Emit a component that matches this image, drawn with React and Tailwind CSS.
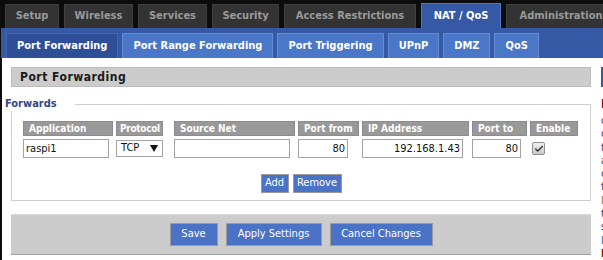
import { Check } from "lucide-react"

const mainTabs = [
    { label: "Setup", w: "w-[54px]" },
    { label: "Wireless", w: "w-[69px]" },
    { label: "Services", w: "w-[69px]" },
    { label: "Security", w: "w-[67px]" },
    { label: "Access Restrictions", w: "w-[132px]" },
    { label: "NAT / QoS", w: "w-[80px]", active: true },
    { label: "Administration", w: "w-[110px]" },
]

const subTabs = [
    { label: "Port Forwarding", active: true },
    { label: "Port Range Forwarding" },
    { label: "Port Triggering" },
    { label: "UPnP" },
    { label: "DMZ" },
    { label: "QoS" },
]

function Header({ children, className = "pl-[5px]" }) {
    return (
        <div className={`h-[15px] bg-[#999] border border-[#8c8c8c] text-white font-bold text-[10px] leading-[13px] whitespace-nowrap overflow-hidden ${className}`}>
            {children}
        </div>
    )
}

function Field({ value, right, className = "" }) {
    return (
        <div className={`h-[19px] bg-white border border-[#a3a3a3] text-[11px] leading-[17px] px-[2px] text-[#111] ${right ? "text-right" : ""} ${className}`}>
            {value}
        </div>
    )
}

function BlueButton({ children, className = "" }) {
    return (
        <div className={`flex items-center justify-center bg-[#4a72c6] border border-[#9b9b9b] text-white text-[11px] ${className}`}>
            {children}
        </div>
    )
}

export default function App() {
    return (
        <div className="w-[603px] h-[260px] overflow-hidden bg-[#0c0c0c] font-['DejaVu_Sans_Condensed','DejaVu_Sans',sans-serif]">
            {/* Main tabs */}
            <div className="flex items-end h-[28px] pl-[5px] gap-[5px]">
                {mainTabs.map((t) => (
                    <div
                        key={t.label}
                        className={`${t.w} shrink-0 flex items-center justify-center text-[11px] font-bold whitespace-nowrap border border-b-0 ${t.active ? "h-[25px] bg-[#3559a5] border-[#5076c2] text-white" : "h-[24px] bg-[#333] border-[#3e3e3e] text-[#9a9a9a]"}`}
                    >
                        {t.label}
                    </div>
                ))}
            </div>

            {/* Sub tabs */}
            <div className="ml-[1px] h-[30px] bg-[#3559a5] flex items-end gap-[4px] pl-[5px]">
                {subTabs.map((t) => (
                    <div
                        key={t.label}
                        className={`h-[25px] px-[10px] flex items-center text-[11px] font-bold text-white whitespace-nowrap border border-b-0 ${t.active ? "bg-[#2e4f98] border-[#4667b2]" : "bg-[#4a77c8] border-[#658cd4]"}`}
                    >
                        {t.label}
                    </div>
                ))}
            </div>

            {/* Content */}
            <div className="ml-[2px] h-[202px] bg-white flex">
                <div className="w-[598px] shrink-0 pt-[9px] px-[9px]">
                    <div className="h-[20px] bg-[#ccc] border border-[#bdbdbd] pl-[8px] text-[12px] font-bold tracking-[0.5px] leading-[18px] text-[#1a1a1a]">
                        Port Forwarding
                    </div>

                    <fieldset className="mt-[10px] border border-[#cfcfcf] pl-[11px] pb-[7px]">
                        <legend className="ml-[-18px] pr-[18px] text-[11px] font-bold leading-[14px] text-[#34478c]">
                            Forwards
                        </legend>
                        <div className="pt-[10px] grid grid-cols-[90px_55px_121px_61px_107px_55px_48px] gap-x-[3px] gap-y-[3px]">
                            <Header>Application</Header>
                            <Header className="w-[47px] pl-[3px] tracking-[-0.3px]">Protocol</Header>
                            <Header>Source Net</Header>
                            <Header>Port from</Header>
                            <Header>IP Address</Header>
                            <Header>Port to</Header>
                            <Header>Enable</Header>

                            <Field value="raspi1" className="w-[86px]" />
                            <div className="w-[47px] h-[17px] mt-[1px] border border-[#a3a3a3] flex items-center justify-between pl-[4px] pr-[4px] text-[11px] text-[#111]">
                                <span>TCP</span>
                                <svg width="8" height="7" viewBox="0 0 8 7"><path d="M0 0H8L4 7Z" fill="#111" /></svg>
                            </div>
                            <Field value="" className="w-[116px]" />
                            <Field value="80" right className="w-[50px]" />
                            <Field value="192.168.1.43" right className="w-[101px]" />
                            <Field value="80" right className="w-[49px]" />
                            <div className="pl-[2px] pt-[3px]">
                                <div className="w-[13px] h-[13px] rounded-[2px] border border-[#8f8f8f] bg-gradient-to-b from-[#f0f0f0] to-[#c9c9c9] flex items-center justify-center">
                                    <Check size={10} strokeWidth={3.5} className="text-[#333]" />
                                </div>
                            </div>
                        </div>
                        <div className="mt-[16px] flex justify-center gap-[4px] pr-[11px]">
                            <BlueButton className="w-[28px] h-[19px]">Add</BlueButton>
                            <BlueButton className="w-[49px] h-[19px]">Remove</BlueButton>
                        </div>
                    </fieldset>

                    <div className="mt-[13px] h-[41px] bg-[#ccc] border-t border-t-[#d9d9d9] border-b border-b-[#9f9f9f] flex justify-center gap-[8px] pt-[8px]">
                        <BlueButton className="w-[48px] h-[23px]">Save</BlueButton>
                        <BlueButton className="w-[96px] h-[23px]">Apply Settings</BlueButton>
                        <BlueButton className="w-[103px] h-[23px]">Cancel Changes</BlueButton>
                    </div>
                </div>

                {/* Help sidebar */}
                <div className="w-[200px] shrink-0 pt-[9px] pl-[1px]">
                    <div className="h-[20px] bg-[#3559a5]"></div>
                    <div className="mt-[10px] text-[12px] font-bold leading-[14px] text-[#8b0000] whitespace-nowrap">Port Forwarding:</div>
                    <div className="mt-[3px] text-[11px] leading-[13.3px] text-[#5a1f5a] whitespace-nowrap">
                        <div>certain applications may</div>
                        <div>open specific ports in</div>
                        <div>for it to function</div>
                        <div>applications include</div>
                        <div>certain online games.</div>
                        <div>for a certain port from</div>
                        <div className="text-[#b5651d]">Internet, the router</div>
                        <div>the data to the</div>
                        <div>security concerns,</div>
                        <div className="text-[#2a4fa8]">limit port forwarding</div>
                        <div className="text-[#8b0000] font-bold">More...</div>
                    </div>
                </div>
            </div>
        </div>
    )
}
